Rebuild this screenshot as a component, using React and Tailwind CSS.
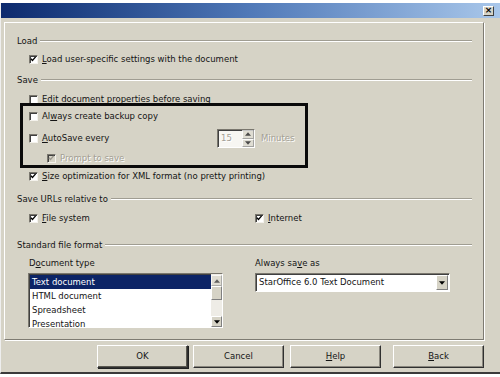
import React from 'react'

const off = '[text-shadow:1px_1px_0_#ffffff] text-[#a3a095]'

function Check({ checked, disabled }) {
  return (
    <span
      className={`relative block w-[9px] h-[9px] shrink-0 border border-[#7a776e] border-b-[#f4f2ec] border-r-[#f4f2ec] shadow-[inset_1px_1px_0_#404040] ${disabled ? 'bg-[#d6d3c6]' : 'bg-white'}`}
    >
      {checked && (
        <svg viewBox="0 0 9 9" className="absolute left-[0px] top-[0px] w-[7px] h-[7px]">
          <path
            d="M1.2 3.6 L3.2 5.8 L7.2 1.2"
            fill="none"
            stroke={disabled ? '#9a978d' : '#000'}
            strokeWidth="1.7"
          />
        </svg>
      )}
    </span>
  )
}

function Heading({ label, className = '' }) {
  return (
    <div className={`flex items-center pl-3 pr-[11px] ${className}`}>
      <span className="mr-[3px]">{label}</span>
      <div className="flex-1 border-t border-[#a09d92] border-b border-b-white" />
    </div>
  )
}

function Option({ checked, disabled, children, className = '' }) {
  return (
    <div className={`flex items-center gap-[4px] ${className}`}>
      <Check checked={checked} disabled={disabled} />
      <span className={disabled ? off : ''}>{children}</span>
    </div>
  )
}

function Btn({ children, def }) {
  return (
    <button
      className={`w-[91px] h-[23px] bg-[#d6d3c6] border border-t-white border-l-white border-r-[#303030] border-b-[#303030] ${def ? 'shadow-[inset_-1px_-1px_0_#5a5850,1px_1px_0_#202020]' : 'shadow-[inset_-1px_-1px_0_#8a877e]'}`}
    >
      {children}
    </button>
  )
}

function Arrow({ up }) {
  return (
    <svg viewBox="0 0 7 4" className="w-[6px] h-[4px]">
      <path d={up ? 'M0 4 L3.5 0 L7 4 Z' : 'M0 0 L3.5 4 L7 0 Z'} fill="#000" />
    </svg>
  )
}

const docs = ['Text document', 'HTML document', 'Spreadsheet', 'Presentation']

export default function App() {
  return (
    <div className="w-[500px] h-[377px] bg-white overflow-hidden font-['DejaVu_Sans',sans-serif] text-[8.5px] text-[#141414] leading-none">
      <div className="h-[3px]" />
      <div className="h-[371px] bg-[#d6d3c6] border-l border-l-[#eeeeee] border-b-2 border-b-[#3a3a3a] flex flex-col">
        {/* title bar */}
        <div className="h-[15px] bg-gradient-to-r from-[#0d2a6e] via-[#5079b8] to-[#a9c7ea] flex items-center justify-end pr-[6px]">
          <div className="w-[11px] h-[10px] bg-[#d6d3c6] border border-t-white border-l-white border-r-[#404040] border-b-[#404040] flex items-center justify-center">
            <span className="text-[9px] font-bold leading-none text-black">×</span>
          </div>
        </div>

        {/* options panel */}
        <div className="mt-[4px] ml-[3px] w-[480px] h-[318px] border border-[#7e7b72] border-t-white border-l-white shadow-[1px_1px_0_#ffffff] flex flex-col">
          <Heading label="Load" className="mt-[9px] h-[18px]" />
          <Option checked className="h-[18px] pl-[24px]">
            <u className="underline-offset-[1px]">L</u>oad user-specific settings with the document
          </Option>
          <Heading label="Save" className="h-[24px]" />
          <Option className="h-[14px] pl-[24px]">Edit document properties before saving</Option>

          <div className="relative -mt-[3px] ml-[15px] w-[288px] h-[65px] border-[3px] border-[#0a0a0a] flex flex-col">
            <Option className="h-[21px] pl-[6px]">
              Al<u className="underline-offset-[1px]">w</u>ays create backup copy
            </Option>
            <div className="h-[23px] pl-[6px] flex items-center">
              <Check />
              <span className="ml-[4px] w-[175px]">
                <u className="underline-offset-[1px]">A</u>utoSave every
              </span>
              <div className="w-[38px] h-[19px] flex border border-[#7a776e] border-b-white border-r-white shadow-[inset_1px_1px_0_#404040] bg-[#f7f6f2]">
                <span className={`flex-1 pl-[3px] flex items-center ${off}`}>15</span>
                <div className="w-[12px] flex flex-col">
                  <div className="flex-1 bg-[#d6d3c6] border border-t-white border-l-white border-[#808080] flex items-center justify-center opacity-70">
                    <Arrow up />
                  </div>
                  <div className="flex-1 bg-[#d6d3c6] border border-t-white border-l-white border-[#808080] flex items-center justify-center opacity-70">
                    <Arrow />
                  </div>
                </div>
              </div>
              <span className={`ml-[6px] ${off}`}>Minutes</span>
            </div>
            <Option checked disabled className="h-[15px] pl-[24px] pt-[2px]">
              Prompt to save
            </Option>
          </div>

          <Option checked className="h-[16px] pl-[24px]">
            <u className="underline-offset-[1px]">S</u>ize optimization for XML format (no pretty printing)
          </Option>
          <Heading label="Save URLs relative to" className="mt-[4px] h-[22px]" />
          <div className="h-[16px] pl-[24px] flex items-center">
            <Option checked className="w-[226px]">
              <u className="underline-offset-[1px]">F</u>ile system
            </Option>
            <Option checked>
              <u className="underline-offset-[1px]">I</u>nternet
            </Option>
          </div>
          <Heading label="Standard file format" className="mt-[9px] h-[20px]" />

          <div className="flex">
            <div className="ml-[23px] w-[195px] flex flex-col">
              <div className="h-[16px] flex items-center pl-[1px]">
                D<u className="underline-offset-[1px]">o</u>cument type
              </div>
              <div className="mt-[2px] h-[55px] flex border border-[#7a776e] border-b-white border-r-white shadow-[inset_1px_1px_0_#404040] bg-white">
                <div className="flex-1 pt-[1px] pl-[1px] overflow-hidden">
                  {docs.map((d, i) => (
                    <div
                      key={d}
                      className={`h-[14px] pl-[2px] flex items-center ${i === 0 ? 'bg-[#0c2466] text-white' : ''}`}
                    >
                      {d}
                    </div>
                  ))}
                </div>
                <div className="w-[11px] flex flex-col bg-[#eeece6] pt-[1px]">
                  <div className="h-[11px] bg-[#d6d3c6] border border-t-white border-l-white border-[#808080] flex items-center justify-center opacity-60">
                    <Arrow up />
                  </div>
                  <div className="h-[14px] bg-[#d6d3c6] border border-t-white border-l-white border-[#808080]" />
                  <div className="flex-1" />
                  <div className="h-[11px] bg-[#d6d3c6] border border-t-white border-l-white border-[#808080] flex items-center justify-center">
                    <Arrow />
                  </div>
                </div>
              </div>
            </div>

            <div className="ml-[32px] w-[195px] flex flex-col">
              <div className="h-[16px] flex items-center">
                Always sa<u className="underline-offset-[1px]">v</u>e as
              </div>
              <div className="mt-[2px] h-[19px] flex border border-[#7a776e] border-b-white border-r-white shadow-[inset_1px_1px_0_#404040] bg-white">
                <span className="flex-1 pl-[3px] flex items-center">StarOffice 6.0 Text Document</span>
                <div className="w-[12px] my-[1px] mr-[1px] bg-[#d6d3c6] border border-t-white border-l-white border-[#808080] flex items-center justify-center">
                  <Arrow />
                </div>
              </div>
            </div>
          </div>
        </div>

        {/* buttons */}
        <div className="mt-[5px] h-[23px] flex pl-[96px]">
          <Btn def>OK</Btn>
          <div className="w-[5px]" />
          <Btn>Cancel</Btn>
          <div className="w-[6px]" />
          <Btn>
            <u className="underline-offset-[1px]">H</u>elp
          </Btn>
          <div className="w-[12px]" />
          <Btn>
            <u className="underline-offset-[1px]">B</u>ack
          </Btn>
        </div>
      </div>
    </div>
  )
}
